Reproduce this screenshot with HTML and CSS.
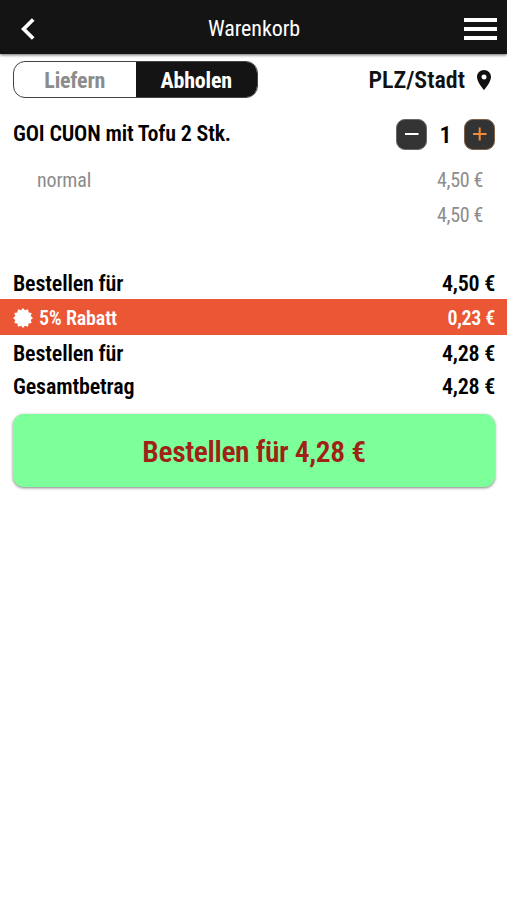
FILE: index.html
```html
<!DOCTYPE html>
<html lang="de">

<head>
    <meta charset="UTF-8">
    <meta name="viewport" content="width=device-width, initial-scale=1.0">
    <title>Warenkorb</title>
    <link rel="stylesheet" href="styles.css">
</head>

<body>
    <header class="topbar">
        <svg class="back" width="14" height="22" viewBox="0 0 14 22">
            <path d="M12.2 1.5 L2.6 11 L12.2 20.5" fill="none" stroke="#fff" stroke-width="3.8" />
        </svg>
        <h1 class="title"><span class="txt">Warenkorb</span></h1>
        <div class="menu">
            <span class="bar"></span>
            <span class="bar"></span>
            <span class="bar"></span>
        </div>
    </header>

    <main>
        <div class="delivery">
            <div class="switch">
                <div class="option"><span class="txt">Liefern</span></div>
                <div class="option active"><span class="txt">Abholen</span></div>
            </div>
            <div class="place">
                <span class="txt">PLZ/Stadt</span>
                <svg class="pin" width="14" height="20" viewBox="0 0 14 20">
                    <path fill="#111" fill-rule="evenodd" d="M7 0C3.1 0 0 3.1 0 7c0 5.2 7 13 7 13s7-7.8 7-13c0-3.9-3.1-7-7-7zm0 4.5a2.5 2.5 0 1 1 0 5 2.5 2.5 0 0 1 0-5z" />
                </svg>
            </div>
        </div>

        <div class="item">
            <span class="name txt">GOI CUON mit Tofu 2 Stk.</span>
            <div class="amount">
                <div class="step minus">
                    <svg width="29" height="29" viewBox="0 0 29 29">
                        <path d="M8 14H21.5" stroke="#fff" stroke-width="2" />
                    </svg>
                </div>
                <span class="count txt">1</span>
                <div class="step plus">
                    <svg width="29" height="29" viewBox="0 0 29 29">
                        <path d="M8 14H21.5M14.7 7.5V20.5" stroke="#f28a38" stroke-width="2" />
                    </svg>
                </div>
            </div>
        </div>
        <div class="detail">
            <span class="txt">normal</span>
            <span class="txt right">4,50 €</span>
        </div>
        <div class="detail sum">
            <span class="txt right">4,50 €</span>
        </div>

        <div class="total first">
            <span class="txt">Bestellen für</span>
            <span class="txt right">4,50 €</span>
        </div>
        <div class="total discount">
            <svg class="badge" width="20" height="20" viewBox="-10 -10 20 20">
                <path fill="#fff" d="M0-10L2-7.700 5-8.700 5.600-5.600 8.700-5 7.700-2 10 0 7.700 2 8.700 5 5.600 5.600 5 8.700 2 7.700 0 10-2 7.700-5 8.700-5.600 5.600-8.700 5-7.700 2-10 0-7.700-2-8.700-5-5.600-5.600-5-8.700-2-7.700z" />
            </svg>
            <span class="txt">5% Rabatt</span>
            <span class="txt right">0,23 €</span>
        </div>
        <div class="total second">
            <span class="txt">Bestellen für</span>
            <span class="txt right">4,28 €</span>
        </div>
        <div class="total">
            <span class="txt">Gesamtbetrag</span>
            <span class="txt right">4,28 €</span>
        </div>

        <button class="order"><span class="txt">Bestellen für 4,28 €</span></button>
    </main>
</body>

</html>
```
FILE: styles.css
```css
* {
    box-sizing: border-box;
    margin: 0;
    padding: 0;
}

body {
    min-height: 100vh;
    font-family: "Roboto Condensed", Roboto, sans-serif;
    font-stretch: 75%;
    background: #fff;
    color: #111;
}

.txt {
    white-space: nowrap;
}

.topbar {
    display: flex;
    align-items: center;
    justify-content: space-between;
    height: 54px;
    padding: 3px 10px 0 21px;
    background: #141414;
    box-shadow: 0 1px 3px rgba(0, 0, 0, 0.6);
}

.back {
    margin-right: 9px;
}

.title {
    font-size: 22px;
    font-weight: 400;
    letter-spacing: -0.1px;
    color: #fff;
}

.menu {
    display: flex;
    flex-direction: column;
    gap: 5px;
    width: 33px;
}

.bar {
    height: 4px;
    background: #fff;
}

.delivery {
    display: flex;
    justify-content: space-between;
    align-items: center;
    height: 37px;
    margin: 7px 16px 0 13px;
}

.switch {
    display: flex;
    width: 245px;
    height: 37px;
    border: 1px solid #444;
    border-radius: 12px;
    overflow: hidden;
}

.option {
    display: flex;
    flex: 1;
    align-items: center;
    justify-content: center;
    padding-top: 2px;
    font-size: 22px;
    font-weight: 700;
    letter-spacing: -0.2px;
    color: #8c8c8c;
}

.active {
    background: #141414;
    color: #fff;
}

.place {
    display: flex;
    align-items: center;
    gap: 12px;
    font-size: 24px;
    font-weight: 600;
}

.item {
    display: flex;
    align-items: center;
    justify-content: space-between;
    height: 46px;
    margin: 13px 12px 0 13px;
    font-size: 22px;
    font-weight: 600;
    color: #000;
}

.name {
    letter-spacing: -0.17px;
    margin-top: -2px;
}

.amount {
    display: flex;
    align-items: center;
}

.count {
    width: 37px;
    padding-top: 2px;
    font-size: 24px;
    text-align: center;
}

.step {
    width: 31px;
    height: 31px;
    border: 1px solid #666;
    border-radius: 9px;
    background: #333;
}

.step svg {
    display: block;
}

.plus {
    border-color: #80614a;
}

.detail {
    display: flex;
    align-items: center;
    height: 35px;
    margin: 5px 24px 0 37px;
    font-size: 20px;
    letter-spacing: -0.15px;
    color: #8c8c8c;
}

.detail .right {
    letter-spacing: -0.35px;
}

.sum {
    height: 36px;
    margin-top: 0;
}

.right {
    margin-left: auto;
}

.total {
    display: flex;
    align-items: center;
    height: 33px;
    padding: 0 12px 0 13px;
    font-size: 22px;
    font-weight: 600;
    letter-spacing: -0.15px;
    color: #000;
}

.total .right {
    letter-spacing: -0.25px;
}

.first {
    margin-top: 33px;
    padding-top: 2px;
}

.discount {
    height: 36px;
    padding-top: 2px;
    background: #eb5635;
    color: #fff;
    font-size: 20px;
}

.discount .right {
    letter-spacing: -0.35px;
}

.second {
    margin-top: 2px;
}

.badge {
    margin-right: 6px;
}

.order {
    display: block;
    width: 482px;
    height: 73px;
    margin: 11px 12px 0 13px;
    padding-top: 2px;
    border: none;
    border-radius: 11px;
    background: #7dff9a;
    box-shadow: 0 1px 3px rgba(0, 0, 0, 0.5);
    color: #a02116;
    font: inherit;
    font-stretch: 75%;
    font-size: 29.5px;
    font-weight: 600;
    letter-spacing: -0.35px;
}
```
